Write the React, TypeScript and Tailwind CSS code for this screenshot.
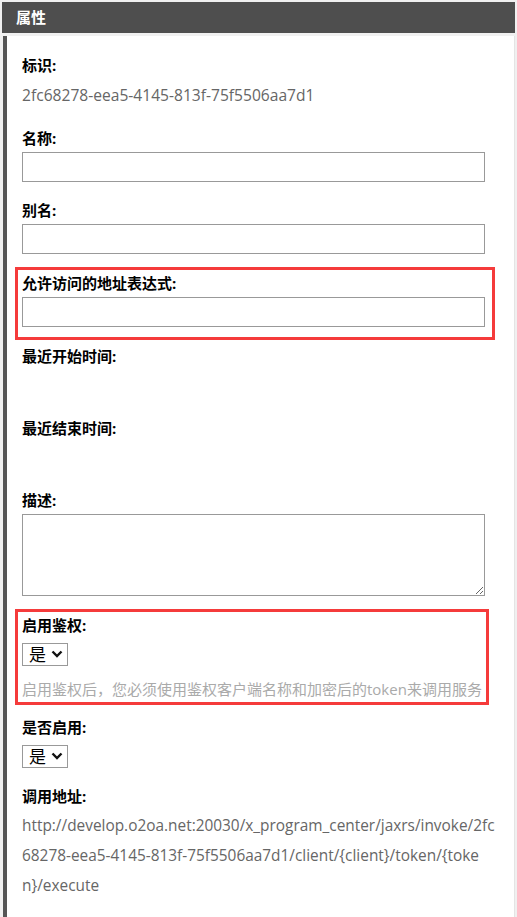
import type { ReactNode } from "react";

const FONT = "font-['Open_Sans','Noto_Sans_CJK_SC',sans-serif]";

const Label = ({ children }: { children: ReactNode }) => (
  <div className="h-[20px] leading-[20px] text-[15px] font-bold text-black">{children}</div>
);

const TextInput = () => (
  <input type="text" className="mt-[4px] block h-[30px] w-[463px] border border-[#999] bg-white outline-none" />
);

const FakeSelect = ({ value }: { value: string }) => (
  <div className="inline-flex h-[23px] w-[46px] items-center border border-[#999] bg-white pl-[6px] text-[17px] leading-none text-black">
    <span>{value}</span>
    <svg className="ml-[5px]" width="12" height="8" viewBox="0 0 12 8">
      <path d="M1.5 1.5 L6 6 L10.5 1.5" fill="none" stroke="#111" strokeWidth="2.4" />
    </svg>
  </div>
);

const URL_LINES = [
  "http://develop.o2oa.net:20030/x_program_center/jaxrs/invoke/2fc",
  "68278-eea5-4145-813f-75f5506aa7d1/client/{client}/token/{toke",
  "n}/execute",
];

export default function App() {
  return (
    <div className={`${FONT} flex min-h-screen flex-col bg-[#f0f0f0] px-[2px] pt-[2px]`}>
      <div className="flex h-[31px] items-center bg-[#4e4e4e] pl-[14px] text-[15px] font-bold text-white">属性</div>
      <div className="mt-[3px] ml-[1px] flex-1 border-l-4 border-l-[#555] border-r border-r-[#e4e4e4] bg-white pt-[19px] pl-[15px] pr-[16px] pb-[30px]">
        <Label>标识:</Label>
        <div className="mt-[5px] h-[30px] text-[15.6px] leading-[30px] text-[#666]">2fc68278-eea5-4145-813f-75f5506aa7d1</div>

        <div className="mt-[18px]">
          <Label>名称:</Label>
          <TextInput />
        </div>

        <div className="mt-[18px]">
          <Label>别名:</Label>
          <TextInput />
        </div>

        <div className="mt-[13px] -ml-[7px] w-[480px] border-[3px] border-[#f53b3b] pt-[3px] pl-[4px] pb-[10px]">
          <Label>允许访问的地址表达式:</Label>
          <TextInput />
        </div>

        <div className="mt-[6px]">
          <Label>最近开始时间:</Label>
          <div className="mt-[4px] h-[30px]" />
        </div>

        <div className="mt-[18px]">
          <Label>最近结束时间:</Label>
          <div className="mt-[4px] h-[30px]" />
        </div>

        <div className="mt-[18px]">
          <Label>描述:</Label>
          <textarea className="mt-[4px] block h-[82px] w-[463px] border border-[#999] bg-white outline-none" />
        </div>

        <div className="mt-[13px] -ml-[7px] w-[474px] border-[3px] border-[#f53b3b] pt-[3px] pl-[4px] pb-[1px]">
          <Label>启用鉴权:</Label>
          <div className="mt-[4px] flex h-[30px] items-center">
            <FakeSelect value="是" />
          </div>
          <div className="mt-[8px] h-[24px] text-[15px] leading-[24px] text-[#aaa]">
            启用鉴权后，您必须使用鉴权客户端名称和加密后的token来调用服务
          </div>
        </div>

        <div className="mt-[12px]">
          <Label>是否启用:</Label>
          <div className="mt-[4px] flex h-[30px] items-center">
            <FakeSelect value="是" />
          </div>
        </div>

        <div className="mt-[15px]">
          <Label>调用地址:</Label>
          <div className="mt-[5px] text-[15.4px] leading-[30px] text-[#666]">
            {URL_LINES.map((line) => (
              <div key={line} className="whitespace-nowrap">{line}</div>
            ))}
          </div>
        </div>
      </div>
    </div>
  );
}
